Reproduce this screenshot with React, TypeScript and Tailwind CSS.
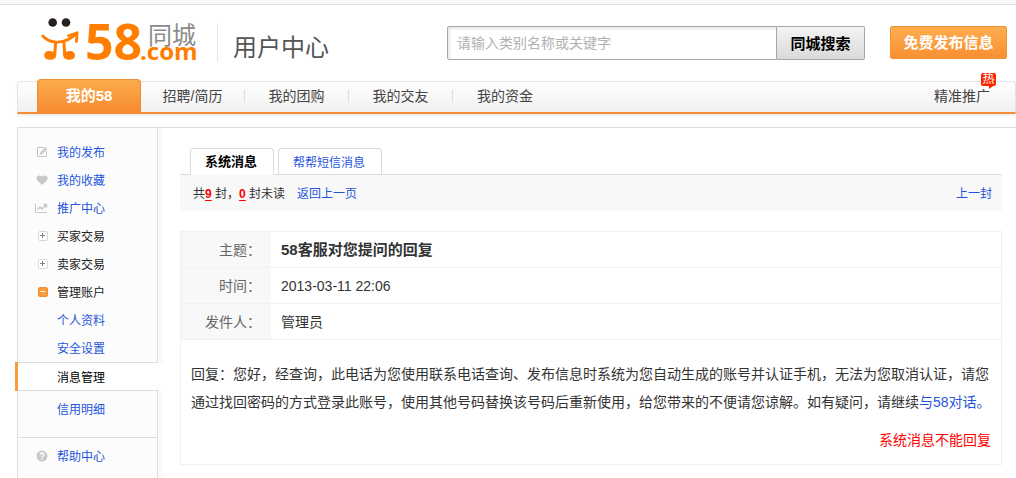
import { useState } from 'react';
import type { ReactNode } from 'react';

interface NavItem {
    label: string;
    active?: boolean;
}

interface SideItem {
    label: string;
    icon?: ReactNode;
    dark?: boolean;
}

const navItems: NavItem[] = [
    { label: '我的58', active: true },
    { label: '招聘/简历' },
    { label: '我的团购' },
    { label: '我的交友' },
    { label: '我的资金' },
];

function Logo() {
    return (
        <svg width="158" height="48" viewBox="0 0 158 48" role="img" aria-label="58同城" className="overflow-visible">
            <circle cx="11.7" cy="7.5" r="4.3" fill="#26211e" />
            <circle cx="25" cy="7.5" r="4.3" fill="#26211e" />
            <g fill="none" stroke="#ff7e00" strokeWidth="2.8" strokeLinecap="round" strokeLinejoin="round">
                <path d="M1.8 21 C9 29 24 30 35.5 18.5" />
                <path d="M27.5 20.8 L36.2 17.8 L35.4 26.5" />
                <path d="M14.5 28 L13.8 40 M23 28 L23.7 40" strokeWidth="3" />
            </g>
            <path d="M3.2 40.5 C3.2 36.5 7 35.5 10 36.2 L15 37 V41 C15 46.200 3.200 46.200 3.200 40.500Z" fill="#ff7e00" />
            <path d="M34 40.500 C34 36.500 30.500 35.500 27.500 36.200 L22.500 37 V41 C22.500 46.200 34 46.200 34 40.500Z" fill="#ff7e00" />
            <text x="44" y="45" fontSize="50" fontWeight="700" fill="#ff7e00" className="font-['Open_Sans',sans-serif]">58</text>
            <text x="99" y="45" fontSize="24" fontWeight="700" fill="#ff7e00" className="font-['Open_Sans',sans-serif]">.com</text>
            <text x="107" y="29" fontSize="24" fontWeight="400" fill="#8a8a8a" className="font-['Noto_Sans_CJK_SC',sans-serif]">同城</text>
        </svg>
    );
}

function EditIcon() {
    return (
        <svg width="12" height="12" viewBox="0 0 12 12" fill="none" stroke="#c8c8c8">
            <path d="M8 1.500 H1.500 V10.500 H10.500 V5" />
            <path d="M4 8.500 L4.500 6.500 L9.500 1.500 L11 3 L6 8Z" fill="#c8c8c8" strokeWidth="0.500" />
        </svg>
    );
}

function HeartIcon() {
    return (
        <svg width="12" height="12" viewBox="0 0 12 12" fill="#c8c8c8">
            <path d="M6 11 L1.500 6.800 C-0.800 4.200 1 1.500 3.300 1.500 C4.600 1.500 5.500 2.200 6 3 C6.500 2.200 7.400 1.500 8.700 1.500 C11 1.500 12.800 4.200 10.500 6.800Z" />
        </svg>
    );
}

function TrendIcon() {
    return (
        <svg width="13" height="12" viewBox="0 0 13 12" fill="none" stroke="#c8c8c8">
            <path d="M0.500 1.500 V10.500 H12" />
            <path d="M2.500 7.500 L5 5 L7 7 L11 3 M8.500 2.500 H11.500 V5.500" strokeWidth="1.500" />
        </svg>
    );
}

function PlusIcon() {
    return (
        <svg width="10" height="10" viewBox="0 0 10 10">
            <rect x="0.500" y="0.500" width="9" height="9" rx="1.500" fill="#fff" stroke="#d8d8d8" />
            <path d="M2 4.500 H7 M4.500 2 V7" stroke="#808080" />
        </svg>
    );
}

function MinusIcon() {
    return (
        <svg width="10" height="10" viewBox="0 0 10 10">
            <rect x="0.500" y="0.500" width="9" height="9" rx="1.500" fill="#fb9a3a" stroke="#f08f30" />
            <path d="M2 4.500 H7" stroke="#fff" />
        </svg>
    );
}

function HelpIcon() {
    return (
        <svg width="12" height="12" viewBox="0 0 12 12" fill="none">
            <circle cx="6" cy="6" r="5.500" fill="#c9c9c9" />
            <path d="M4.200 4.800 C4.200 2.500 7.800 2.500 7.800 4.600 C7.800 5.800 6 5.900 6 7.200 M6 8.300 V9.600" stroke="#fff" strokeWidth="1.400" />
        </svg>
    );
}

const sideItems: SideItem[] = [
    { label: '我的发布', icon: <EditIcon /> },
    { label: '我的收藏', icon: <HeartIcon /> },
    { label: '推广中心', icon: <TrendIcon /> },
    { label: '买家交易', icon: <PlusIcon />, dark: true },
    { label: '卖家交易', icon: <PlusIcon />, dark: true },
    { label: '管理账户', icon: <MinusIcon />, dark: true },
    { label: '个人资料' },
    { label: '安全设置' },
];

function SideRow({ label, icon, dark }: SideItem) {
    return (
        <li className="flex h-7 items-center">
            <span className="flex w-[39px] justify-end pr-[9px]">{icon}</span>
            <a href="#" className={dark ? 'pt-0.5 text-[#222]' : 'pt-0.5 text-[#1f55dd]'}>{label}</a>
        </li>
    );
}

function Header() {
    const [query, setQuery] = useState('');

    return (
        <header className="flex h-[74px] items-start pr-[9px] pl-[41px]">
            <a href="#" className="mt-[10px]"><Logo /></a>
            <div className="mt-[18px] ml-[18px] h-[39px] border-l border-[#e6e6e6]" />
            <h1 className="mt-[25px] ml-[15px] text-2xl leading-9 text-[#555]">用户中心</h1>
            <form className="mt-[21px] ml-auto flex h-[34px] w-[418px]" onSubmit={(e) => e.preventDefault()}>
                <input
                    type="text"
                    aria-label="搜索"
                    value={query}
                    onChange={(e) => setQuery(e.target.value)}
                    placeholder="请输入类别名称或关键字"
                    className="min-w-0 flex-1 rounded-l-xs border border-[#a6a6a6] bg-white px-[9px] text-sm shadow-[inset_2px_2px_3px_#e8e8e8] outline-none placeholder:text-[#b0b0b0]"
                />
                <button type="submit" className="w-[88px] rounded-r-xs border border-l-0 border-[#a6a6a6] bg-linear-to-b from-[#f3f3f3] to-[#dadada] pt-0.5 text-[15px] font-bold text-black">
                    同城搜索
                </button>
            </form>
            <button type="button" className="mt-[21px] ml-[25px] h-[33px] w-[117px] rounded-xs border border-[#f39334] bg-linear-to-b from-[#fdae50] to-[#f98f31] pt-0.5 text-[15px] font-bold text-white">
                免费发布信息
            </button>
        </header>
    );
}

function MainNav() {
    return (
        <nav className="ml-[17px] shadow-[0_2px_2px_#f1f1f1]">
            <div className="mt-[2px] flex h-[33px] items-end justify-between rounded-t-sm border border-b-2 border-[#e5e5e5] border-b-[#f98d36] bg-linear-to-b from-[#fefefe] to-[#f0f0f0] pr-[25px] pl-[19px] text-sm">
                <ul className="flex">
                    {navItems.map((item, i) => (
                        <li key={item.label} className="flex w-[104px] items-center">
                            {item.active ? (
                                <a href="#" className="flex h-[33px] flex-1 items-center justify-center rounded-t-sm border border-b-0 border-[#f08c35] bg-linear-to-b from-[#fbab4c] to-[#f68a30] text-[15px] font-bold text-white">
                                    {item.label}
                                </a>
                            ) : (
                                <>
                                    <a href="#" className="flex-1 text-center text-[#444]">{item.label}</a>
                                    {i < navItems.length - 1 && <span className="h-3 border-l border-[#dcdcdc]" />}
                                </>
                            )}
                        </li>
                    ))}
                </ul>
                <a href="#" className="relative flex h-[33px] items-center text-[#444]">
                    精准推广
                    <span className="absolute top-[-6px] left-[47px] h-[13px] w-[15px] rounded-xs bg-[#fb2500] text-center text-xs leading-[13px] text-white">
                        热
                        <svg width="4" height="3" viewBox="0 0 4 3" className="absolute top-[13px] left-2" fill="#fb2500">
                            <path d="M0 0 H4 L0 3Z" />
                        </svg>
                    </span>
                </a>
            </div>
        </nav>
    );
}

function Sidebar() {
    return (
        <aside className="ml-[17px] flex w-[141px] shrink-0 flex-col text-xs">
            <ul className="border-x border-b border-[#dedede] bg-[#fcfcfc] pt-[10px] shadow-[5px_0_0_#fafafa]">
                {sideItems.map((item) => (
                    <SideRow key={item.label} {...item} />
                ))}
            </ul>
            <a href="#" aria-current="page" className="relative -my-px -ml-[2px] flex h-[29px] items-center border-l-[3px] border-[#fb9b3c] pt-0.5 pl-[39px] text-black">
                消息管理
            </a>
            <ul className="border-x border-t border-[#dedede] bg-[#fcfcfc] pt-1 pb-[14px] shadow-[5px_0_0_#fafafa]">
                <SideRow label="信用明细" />
            </ul>
            <ul className="flex-1 border-x border-t border-[#dedede] bg-[#fcfcfc] pt-1 shadow-[5px_0_0_#fafafa]">
                <SideRow label="帮助中心" icon={<HelpIcon />} />
            </ul>
        </aside>
    );
}

function MessageTabs() {
    return (
        <div className="flex h-[27px] items-end gap-1 border-b border-[#d5dce2] pl-[10px] text-xs">
            <a href="#" className="-mb-px flex h-[27px] w-[84px] items-center justify-center rounded-t-sm border border-b-0 border-[#d5dce2] bg-white pr-0.5 text-[13px] font-bold text-black">
                系统消息
            </a>
            <a href="#" className="flex h-[26px] w-[104px] items-center justify-center rounded-t-sm border border-b-0 border-[#d5dce2] pt-0.5 pr-0.5 text-[#1f55dd]">
                帮帮短信消息
            </a>
        </div>
    );
}

function MessageDetail() {
    const rows = [
        { label: '主题：', value: '58客服对您提问的回复', strong: true },
        { label: '时间：', value: '2013-03-11 22:06' },
        { label: '发件人：', value: '管理员' },
    ];

    return (
        <section className="mt-5 border border-[#f0f0f0] text-sm text-[#333]">
            <table className="w-full border-separate border-spacing-0">
                <tbody>
                    {rows.map((row) => (
                        <tr key={row.label} className="h-9">
                            <th scope="row" className="w-[90px] border-b border-[#f0f0f0] bg-[#f8f8f8] pr-[10px] text-right font-normal text-[#666]">
                                {row.label}
                            </th>
                            <td className={`border-b border-[#f0f0f0] pl-[10px] ${row.strong ? 'text-[15px] font-bold' : ''}`}>
                                {row.value}
                            </td>
                        </tr>
                    ))}
                </tbody>
            </table>
            <p className="px-[10px] pt-5 leading-7">
                回复：您好，经查询，此电话为您使用联系电话查询、发布信息时系统为您自动生成的账号并认证手机，无法为您取消认证，请您通过找回密码的方式登录此账号，使用其他号码替换该号码后重新使用，给您带来的不便请您谅解。如有疑问，请继续<a href="#" className="text-[#1f55dd]">与58对话。</a>
            </p>
            <p className="px-[10px] pt-[10px] pb-[10px] text-right leading-7 text-[#f00]">系统消息不能回复</p>
        </section>
    );
}

export default function App() {
    return (
        <div className="flex min-h-screen flex-col bg-white font-['Liberation_Sans','Noto_Sans_CJK_SC',sans-serif]">
            <div className="h-[5px] border-b border-[#dcdcdc] bg-[#f8f8f8]" />
            <Header />
            <MainNav />
            <div className="mt-[13px] ml-[17px] border-t border-[#dedede]" />
            <div className="flex flex-1">
                <Sidebar />
                <main className="mr-[14px] ml-[22px] min-w-0 flex-1 pt-5">
                    <MessageTabs />
                    <div className="flex h-9 items-center bg-[#f8f8f8] pt-0.5 pr-[10px] pl-[13px] text-xs text-[#333]">
                        <p>
                            共<b className="text-[#f00] underline underline-offset-2">9</b> 封，<b className="text-[#f00] underline underline-offset-2">0</b> 封未读
                        </p>
                        <a href="#" className="ml-3 text-[#1f55dd]">返回上一页</a>
                        <a href="#" className="ml-auto text-[#1f55dd]">上一封</a>
                    </div>
                    <MessageDetail />
                </main>
            </div>
        </div>
    );
}
